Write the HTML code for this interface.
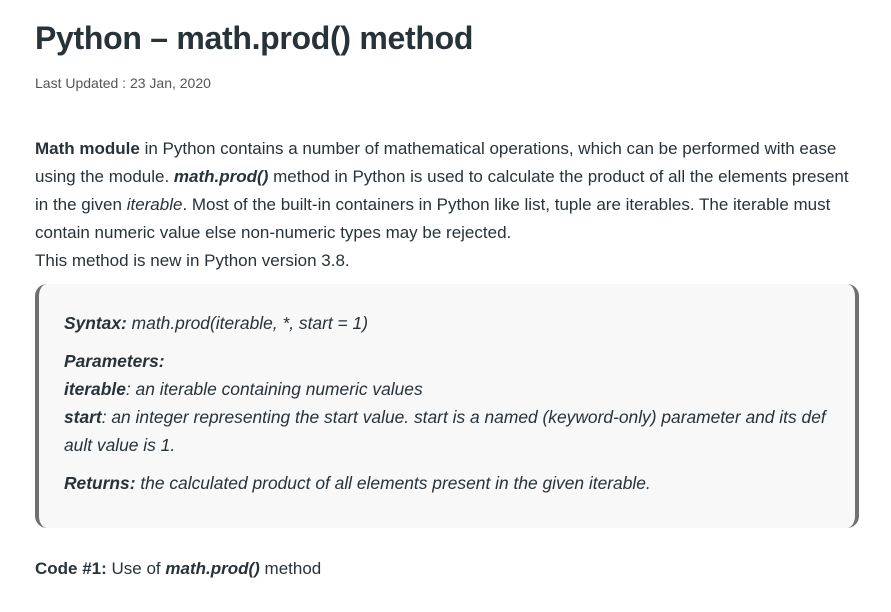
<!DOCTYPE html>
<html><head><meta charset="utf-8"><style>
html,body{margin:0;padding:0;background:#fff;width:891px;height:612px;overflow:hidden}
body{font-family:"Liberation Sans","DejaVu Sans",sans-serif;color:#273239;position:relative}
.a{position:absolute;white-space:nowrap}
h1{position:absolute;left:35px;top:20px;margin:0;font-size:32px;font-weight:bold;letter-spacing:-0.3px;color:#273239}
.up{left:35px;top:75px;font-size:14px;color:#555}
.p{left:35px;font-size:17px}
.box{position:absolute;left:35px;top:284px;width:816px;height:244px;background:#f8f8f8;border-left:4px solid #707070;border-right:4px solid #707070;border-radius:12px}
.i{left:64px;font-size:17.4px;font-style:italic}
b{font-weight:bold}
</style></head><body>
<h1>Python – math.prod() method</h1>
<div class="a up">Last Updated : 23 Jan, 2020</div>
<div class="a p" style="top:139px"><b>Math module</b> in Python contains a number of mathematical operations, which can be performed with ease</div>
<div class="a p" style="top:167px">using the module. <b><i>math.prod()</i></b> method in Python is used to calculate the product of all the elements present</div>
<div class="a p" style="top:195px">in the given <i>iterable</i>. Most of the built-in containers in Python like list, tuple are iterables. The iterable must</div>
<div class="a p" style="top:223px">contain numeric value else non-numeric types may be rejected.</div>
<div class="a p" style="top:251px">This method is new in Python version 3.8.</div>
<div class="box"></div>
<div class="a i" style="top:313px"><b>Syntax:</b> math.prod(iterable, *, start = 1)</div>
<div class="a i" style="top:351px"><b>Parameters:</b></div>
<div class="a i" style="top:379px"><b>iterable</b>: an iterable containing numeric values</div>
<div class="a i" style="top:407px"><b>start</b>: an integer representing the start value. start is a named (keyword-only) parameter and its def</div>
<div class="a i" style="top:435px">ault value is 1.</div>
<div class="a i" style="top:473px"><b>Returns:</b> the calculated product of all elements present in the given iterable.</div>
<div class="a p" style="top:559px"><b>Code #1:</b> Use of <b><i>math.prod()</i></b> method</div>
</body></html>
